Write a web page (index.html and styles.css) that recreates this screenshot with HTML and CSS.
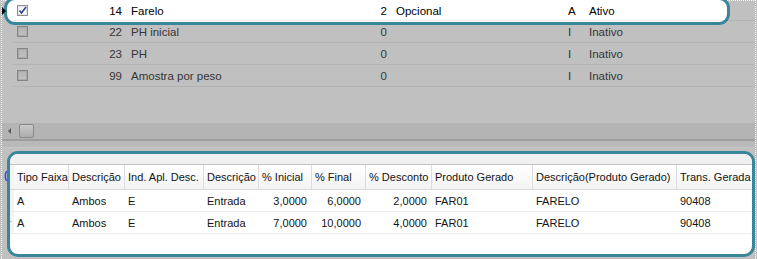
FILE: index.html
```html
<!DOCTYPE html>
<html lang="pt">
<head>
    <meta charset="UTF-8">
    <meta name="viewport" content="width=device-width, initial-scale=1.0">
    <title>Faixas de Desconto</title>
    <link rel="stylesheet" href="styles.css">
</head>
<body>
    <div class="frame">
        <div class="spot"></div>

        <div class="grid-top">
            <div class="row first current">
                <div class="ind"><span class="arrow"></span></div>
                <div class="cell"><span class="check checked">
                    <svg width="9" height="9" viewBox="0 0 9 9"><path d="M1.5 4.5 L3.5 7 L8 1" fill="none" stroke="#2c3f9e" stroke-width="1.6"/></svg>
                </span></div>
                <div class="cell num">14</div>
                <div class="cell">Farelo</div>
                <div class="cell num">2</div>
                <div class="cell">Opcional</div>
                <div class="cell">A</div>
                <div class="cell">Ativo</div>
            </div>
            <div class="row">
                <div class="ind"></div>
                <div class="cell"><span class="check"></span></div>
                <div class="cell num">22</div>
                <div class="cell">PH inicial</div>
                <div class="cell num">0</div>
                <div class="cell"></div>
                <div class="cell">I</div>
                <div class="cell">Inativo</div>
            </div>
            <div class="row">
                <div class="ind"></div>
                <div class="cell"><span class="check"></span></div>
                <div class="cell num">23</div>
                <div class="cell">PH</div>
                <div class="cell num">0</div>
                <div class="cell"></div>
                <div class="cell">I</div>
                <div class="cell">Inativo</div>
            </div>
            <div class="row">
                <div class="ind"></div>
                <div class="cell"><span class="check"></span></div>
                <div class="cell num">99</div>
                <div class="cell">Amostra por peso</div>
                <div class="cell num">0</div>
                <div class="cell"></div>
                <div class="cell">I</div>
                <div class="cell">Inativo</div>
            </div>
        </div>

        <div class="hscroll">
            <span class="scroll-left"></span>
            <span class="thumb"></span>
        </div>
        <div class="splitter"></div>

        <div class="bottom">
            <div class="gutter">
                <span class="mark-head">(</span>
                <span class="mark-row">+</span>
            </div>
            <div class="panel">
                <div class="panel-top"></div>
                <div class="trow head">
                    <div class="ind2"></div>
                    <div class="th">Tipo Faixa</div>
                    <div class="th">Descrição</div>
                    <div class="th">Ind. Apl. Desc.</div>
                    <div class="th">Descrição</div>
                    <div class="th">% Inicial</div>
                    <div class="th">% Final</div>
                    <div class="th">% Desconto</div>
                    <div class="th">Produto Gerado</div>
                    <div class="th">Descrição(Produto Gerado)</div>
                    <div class="th last">Trans. Gerada</div>
                </div>
                <div class="trow">
                    <div class="ind2"></div>
                    <div class="td">A</div>
                    <div class="td">Ambos</div>
                    <div class="td">E</div>
                    <div class="td">Entrada</div>
                    <div class="td num">3,0000</div>
                    <div class="td num">6,0000</div>
                    <div class="td num">2,0000</div>
                    <div class="td">FAR01</div>
                    <div class="td">FARELO</div>
                    <div class="td">90408</div>
                </div>
                <div class="trow">
                    <div class="ind2"></div>
                    <div class="td">A</div>
                    <div class="td">Ambos</div>
                    <div class="td">E</div>
                    <div class="td">Entrada</div>
                    <div class="td num">7,0000</div>
                    <div class="td num">10,0000</div>
                    <div class="td num">4,0000</div>
                    <div class="td">FAR01</div>
                    <div class="td">FARELO</div>
                    <div class="td">90408</div>
                </div>
            </div>
        </div>
    </div>
</body>
</html>
```

FILE: styles.css
```css
body {
    margin: 0;
    background-color: #c0c0c0;
    font-family: "Liberation Sans", Arial, sans-serif;
    overflow: hidden;
}
.frame {
    position: relative;
    width: 753px;
    height: 258px;
    margin-left: 1px;
    border: 1px dotted #ffffff;
    border-bottom: none;
}
.spot {
    position: absolute;
    left: 2px;
    top: -4px;
    width: 726px;
    height: 28px;
    box-sizing: border-box;
    background-color: #ffffff;
    border: 3px solid #37869a;
    border-radius: 11px;
}
.grid-top {
    position: relative;
    height: 122px;
    font-size: 11.5px;
    color: #353535;
}
.row {
    display: grid;
    grid-template-columns: 11px 27px 85px 205px 60px 172px 21px 1fr;
    height: 22px;
}
.row.first {
    height: 20px;
}
.row.current {
    color: #000000;
}
.ind {
    display: flex;
    align-items: center;
}
.arrow {
    width: 0;
    height: 0;
    border-left: 4px solid #000;
    border-top: 4px solid transparent;
    border-bottom: 4px solid transparent;
}
.cell {
    display: flex;
    align-items: center;
    padding-left: 6px;
    border-bottom: 1px solid rgba(0,0,0,0.06);
    white-space: nowrap;
}
.cell.num {
    justify-content: flex-end;
    padding-left: 0;
    padding-right: 3px;
}
.check {
    display: flex;
    align-items: center;
    justify-content: center;
    width: 11px;
    height: 11px;
    margin-left: -2px;
    box-sizing: border-box;
    border: 1px solid #858585;
    background: linear-gradient(#b3b3b3, #c2c2c2);
    box-shadow: inset 0 0 0 1px #a9a9a9;
}
.check.checked {
    border-color: #8e8f8f;
    background: linear-gradient(#f2f2f2, #ffffff);
    box-shadow: inset 0 0 0 1px #e4e4e4;
}
.hscroll {
    position: relative;
    display: flex;
    align-items: center;
    height: 16px;
    background-color: #b4b4b4;
    border-bottom: 2px solid #9d9d9d;
}
.scroll-left {
    width: 0;
    height: 0;
    margin-left: 6px;
    border-right: 3px solid #5a5a5a;
    border-top: 3px solid transparent;
    border-bottom: 3px solid transparent;
}
.thumb {
    width: 13px;
    height: 12px;
    margin-left: 8px;
    border: 1px solid #8a8a8a;
    border-radius: 2px;
    background: linear-gradient(#c9c9c9, #acacac);
}
.splitter {
    height: 6px;
    background-color: #b9b9b9;
    border-bottom: 1px solid #c6c6c6;
    margin-bottom: 3px;
}
.bottom {
    display: flex;
}
.gutter {
    position: relative;
    width: 5px;
}
.mark-head {
    position: absolute;
    left: 2px;
    top: 19px;
    font-size: 10px;
    font-weight: bold;
    color: #2b45d0;
}
.mark-row {
    position: absolute;
    left: 5px;
    top: 66px;
    font-size: 8px;
    color: #777;
}
.panel {
    width: 748px;
    height: 106px;
    box-sizing: border-box;
    border: 3px solid #37869a;
    border-radius: 11px;
    background-color: #ffffff;
    overflow: hidden;
    font-size: 11px;
    color: #141414;
}
.panel-top {
    height: 10px;
    background-color: #f0f0f0;
    border-bottom: 1px solid #c4c4c4;
}
.trow {
    display: grid;
    grid-template-columns: 4px 55px 56px 79px 55px 53px 54px 66px 101px 144px 1fr;
    height: 21px;
    border-bottom: 1px solid #ececec;
}
.trow.head {
    height: 24px;
    background: linear-gradient(#ffffff, #f3f3f3);
    border-bottom: 1px solid #dadada;
}
.ind2 {
    background-color: #f4f4f4;
}
.th, .td {
    display: flex;
    align-items: center;
    padding-left: 3px;
    white-space: nowrap;
    overflow: hidden;
}
.th {
    border-right: 1px solid #dcdcdc;
}
.th.last {
    border-right: none;
}
.td.num {
    justify-content: flex-end;
    padding-left: 0;
    padding-right: 5px;
}
```
